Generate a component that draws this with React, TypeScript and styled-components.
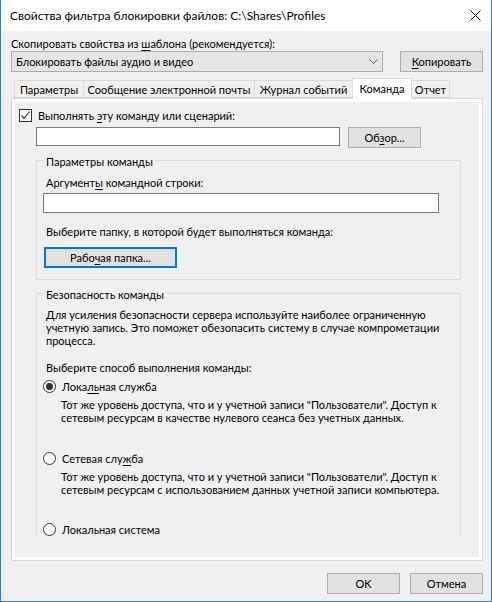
import React from "react";
import styled, { createGlobalStyle } from "styled-components";

const Global = createGlobalStyle`
  html, body { margin: 0; padding: 0; background: #ffffff; }
  body {
    font-family: Lato, "Liberation Sans", sans-serif;
    font-size: 11px;
    color: #000000;
  }
  * { box-sizing: border-box; }
`;

const Window = styled.div`
  width: 492px;
  height: 602px;
  border: 1px solid #1883d7;
  border-top: none;
  background: #f0f0f0;
  display: flex;
  flex-direction: column;
`;

const TitleBar = styled.div`
  height: 31px;
  flex: none;
  background: #ffffff;
  display: flex;
  align-items: center;
  justify-content: space-between;
  padding-left: 9px;
  padding-right: 10px;
`;

const TitleText = styled.span`
  font-size: 12px;
  line-height: 15px;
`;

const Body = styled.div`
  flex: 1;
  display: flex;
  flex-direction: column;
  padding: 5px 8px 0 10px;
`;

const Text = styled.div`
  line-height: 15px;
  white-space: nowrap;
`;

const Key = styled.span`
  text-decoration: underline;
  text-underline-offset: 2px;
  text-decoration-thickness: 1px;
`;

const ComboRow = styled.div`
  display: flex;
  align-items: flex-start;
`;

const Combo = styled.div`
  width: 372px;
  height: 21px;
  background: #e5e5e5;
  border: 1px solid #adadad;
  display: flex;
  align-items: center;
  justify-content: space-between;
  padding: 0 4px 0 4px;
  line-height: 15px;
`;

const Button = styled.div<{ $w: number; $focus?: boolean }>`
  width: ${(p) => p.$w}px;
  height: 21px;
  flex: none;
  background: #e1e1e1;
  border: ${(p) => (p.$focus ? "2px solid #0078d7" : "1px solid #adadad")};
  display: flex;
  align-items: center;
  justify-content: center;
  line-height: 15px;
  white-space: nowrap;
`;

const CopyButton = styled(Button)`
  margin-left: auto;
`;

const TabStrip = styled.div`
  margin-top: 6px;
  height: 20px;
  display: flex;
  align-items: flex-end;
  padding-left: 3px;
  position: relative;
  z-index: 1;
`;

const Tab = styled.div<{ $w: number; $active?: boolean }>`
  width: ${(p) => p.$w}px;
  height: ${(p) => (p.$active ? 21 : 18)}px;
  margin-bottom: ${(p) => (p.$active ? -1 : 0)}px;
  margin-left: -1px;
  border: 1px solid #d9d9d9;
  border-bottom: ${(p) => (p.$active ? "none" : "1px solid #d9d9d9")};
  background: ${(p) => (p.$active ? "#ffffff" : "#f0f0f0")};
  display: flex;
  justify-content: center;
  padding-top: ${(p) => (p.$active ? 2 : 1)}px;
  line-height: 15px;
  white-space: nowrap;
  &:first-child { margin-left: 0; }
`;

const Panel = styled.div`
  height: 463px;
  flex: none;
  border: 1px solid #d9d9d9;
  background: #ffffff;
  padding: 3px;
  display: flex;
  flex-direction: column;
`;

const Page = styled.div`
  flex: 1;
  background: #f0f0f0;
`;

const Clip = styled.div`
  height: 434px;
  overflow: hidden;
  display: flex;
  flex-direction: column;
`;

const CheckRow = styled.div`
  margin-top: 7px;
  padding-left: 4px;
  display: flex;
  align-items: center;
  gap: 6px;
  height: 13px;
`;

const CheckBox = styled.div`
  width: 13px;
  height: 13px;
  border: 1px solid #333333;
  background: #ffffff;
  flex: none;
  display: flex;
`;

const CommandRow = styled.div`
  margin-top: 5px;
  padding-left: 21px;
  display: flex;
  align-items: flex-start;
  gap: 8px;
`;

const Input = styled.div<{ $w: number; $h: number }>`
  width: ${(p) => p.$w}px;
  height: ${(p) => p.$h}px;
  background: #ffffff;
  border: 1px solid #7a7a7a;
  flex: none;
`;

const Group = styled.div<{ $h: number; $mt: number }>`
  position: relative;
  margin-top: ${(p) => p.$mt}px;
  margin-left: 21px;
  width: 425px;
  height: ${(p) => p.$h}px;
  flex: none;
  border: 1px solid #dcdcdc;
  padding: 13px 0 0 6px;
  display: flex;
  flex-direction: column;
  align-items: flex-start;
`;

const Legend = styled.span`
  position: absolute;
  top: -7px;
  left: 7px;
  padding: 0 2px;
  background: #f0f0f0;
  line-height: 15px;
  white-space: nowrap;
`;

const GroupLabel = styled(Text)<{ $mt?: number }>`
  margin-left: 3px;
  margin-top: ${(p) => p.$mt ?? 0}px;
`;

const Spaced = styled.div<{ $mt: number; $ml?: number }>`
  margin-top: ${(p) => p.$mt}px;
  margin-left: ${(p) => p.$ml ?? 0}px;
`;

const Paragraph = styled.div<{ $mt?: number; $ml: number }>`
  margin-top: ${(p) => p.$mt ?? 0}px;
  margin-left: ${(p) => p.$ml}px;
  line-height: 13px;
  white-space: nowrap;
`;

const RadioRow = styled.div<{ $mt: number }>`
  margin-top: ${(p) => p.$mt}px;
  display: flex;
  align-items: center;
  gap: 6px;
  height: 15px;
`;

const Radio = styled.div<{ $on?: boolean }>`
  width: 13px;
  height: 13px;
  border-radius: 50%;
  border: 1px solid #333333;
  background: #ffffff;
  flex: none;
  display: flex;
  align-items: center;
  justify-content: center;
  &::after {
    content: "";
    display: ${(p) => (p.$on ? "block" : "none")};
    width: 7px;
    height: 7px;
    border-radius: 50%;
    background: #333333;
  }
`;

const Footer = styled.div`
  margin-top: 12px;
  display: flex;
  justify-content: flex-end;
  gap: 10px;
`;

const CloseIcon = () => (
  <svg width="11" height="11" viewBox="0 0 11 11">
    <path d="M0.5 0.5 L10.5 10.5 M10.5 0.5 L0.5 10.5" stroke="#000" strokeWidth="1" />
  </svg>
);

const Chevron = () => (
  <svg width="9" height="5" viewBox="0 0 9 5">
    <path d="M0.5 0.5 L4.5 4.5 L8.5 0.5" stroke="#606060" strokeWidth="1" fill="none" />
  </svg>
);

const Check = () => (
  <svg width="11" height="11" viewBox="0 0 11 11">
    <path d="M1.5 5.5 L4 8.5 L9.5 1.5" stroke="#333" strokeWidth="1.2" fill="none" />
  </svg>
);

export default function App() {
  return (
    <>
      <Global />
      <Window>
        <TitleBar>
          <TitleText>Свойства фильтра блокировки файлов: C:\Shares\Profiles</TitleText>
          <CloseIcon />
        </TitleBar>
        <Body>
          <Text>
            Скопировать свойства из <Key>ш</Key>аблона (рекомендуется):
          </Text>
          <ComboRow>
            <Combo>
              <span>Блокировать файлы аудио и видео</span>
              <Chevron />
            </Combo>
            <CopyButton $w={83}>
              <span>
                <Key>К</Key>опировать
              </span>
            </CopyButton>
          </ComboRow>
          <TabStrip>
            <Tab $w={70}>Параметры</Tab>
            <Tab $w={172}>Сообщение электронной почты</Tab>
            <Tab $w={99}>Журнал событий</Tab>
            <Tab $w={60} $active>
              Команда
            </Tab>
            <Tab $w={39}>Отчет</Tab>
          </TabStrip>
          <Panel>
            <Page>
              <Clip>
                <CheckRow>
                  <CheckBox>
                    <Check />
                  </CheckBox>
                  <Text>
                    Выполнять <Key>э</Key>ту команду или сценарий:
                  </Text>
                </CheckRow>
                <CommandRow>
                  <Input $w={304} $h={19} />
                  <Button $w={73}>
                    <span>
                      Об<Key>з</Key>ор...
                    </span>
                  </Button>
                </CommandRow>
                <Group $h={120} $mt={12}>
                  <Legend>Параметры команды</Legend>
                  <GroupLabel $mt={1}>
                    Аргумент<Key>ы</Key> командной строки:
                  </GroupLabel>
                  <Spaced $mt={3}>
                    <Input $w={396} $h={20} />
                  </Spaced>
                  <GroupLabel $mt={11}>Выберите папку, в которой будет выполняться команда:</GroupLabel>
                  <Spaced $mt={8} $ml={1}>
                    <Button $w={133} $focus>
                      <span>
                        Рабо<Key>ч</Key>ая папка...
                      </span>
                    </Button>
                  </Spaced>
                </Group>
                <Group $h={320} $mt={13}>
                  <Legend>Безопасность команды</Legend>
                  <Paragraph $mt={1} $ml={3}>
                    Для усиления безопасности сервера используйте наиболее ограниченную
                    <br />
                    учетную запись. Это поможет обезопасить систему в случае компрометации
                    <br />
                    процесса.
                  </Paragraph>
                  <GroupLabel $mt={13}>Выберите способ выполнения команды:</GroupLabel>
                  <RadioRow $mt={4}>
                    <Radio $on />
                    <Text>
                      Лока<Key>ль</Key>ная служба
                    </Text>
                  </RadioRow>
                  <Paragraph $mt={4} $ml={18}>
                    Тот же уровень доступа, что и у учетной записи "Пользователи". Доступ к
                    <br />
                    сетевым ресурсам в качестве нулевого сеанса без учетных данных.
                  </Paragraph>
                  <RadioRow $mt={27}>
                    <Radio />
                    <Text>
                      Сетевая слу<Key>ж</Key>ба
                    </Text>
                  </RadioRow>
                  <Paragraph $mt={4} $ml={18}>
                    Тот же уровень доступа, что и у учетной записи "Пользователи". Доступ к
                    <br />
                    сетевым ресурсам с использованием данных учетной записи компьютера.
                  </Paragraph>
                  <RadioRow $mt={26}>
                    <Radio />
                    <Text>
                      Локальная систе<Key>м</Key>а
                    </Text>
                  </RadioRow>
                </Group>
              </Clip>
            </Page>
          </Panel>
          <Footer>
            <Button $w={73}>OK</Button>
            <Button $w={73}>Отмена</Button>
          </Footer>
        </Body>
      </Window>
    </>
  );
}
